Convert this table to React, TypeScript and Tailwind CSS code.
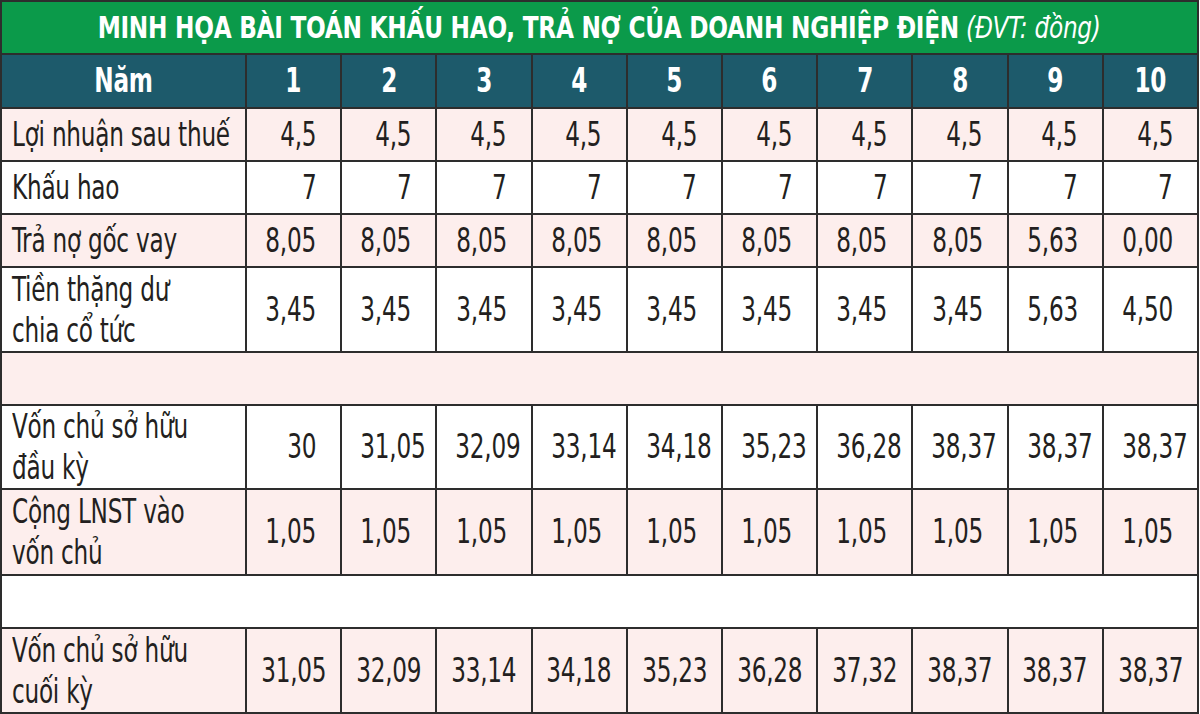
type Row = { label: string[]; values: string[]; pink: boolean; h: string };

const rows: Row[] = [
  { label: ['Lợi nhuận sau thuế'], values: ['4,5', '4,5', '4,5', '4,5', '4,5', '4,5', '4,5', '4,5', '4,5', '4,5'], pink: true, h: 'h-[53px]' },
  { label: ['Khấu hao'], values: ['7', '7', '7', '7', '7', '7', '7', '7', '7', '7'], pink: false, h: 'h-[53px]' },
  { label: ['Trả nợ gốc vay'], values: ['8,05', '8,05', '8,05', '8,05', '8,05', '8,05', '8,05', '8,05', '5,63', '0,00'], pink: true, h: 'h-[53px]' },
  { label: ['Tiền thặng dư', 'chia cổ tức'], values: ['3,45', '3,45', '3,45', '3,45', '3,45', '3,45', '3,45', '3,45', '5,63', '4,50'], pink: false, h: 'h-[85px]' },
];

const rows2: Row[] = [
  { label: ['Vốn chủ sở hữu', 'đầu kỳ'], values: ['30', '31,05', '32,09', '33,14', '34,18', '35,23', '36,28', '38,37', '38,37', '38,37'], pink: false, h: 'h-[84px]' },
  { label: ['Cộng LNST vào', 'vốn chủ'], values: ['1,05', '1,05', '1,05', '1,05', '1,05', '1,05', '1,05', '1,05', '1,05', '1,05'], pink: true, h: 'h-[86px]' },
];

const last = ['31,05', '32,09', '33,14', '34,18', '35,23', '36,28', '37,32', '38,37', '38,37', '38,37'];

const cell = 'border-2 border-[#2d2d2d] whitespace-nowrap';

// the reference uses a condensed face; squeeze DejaVu Condensed to match
function Narrow({ children, origin = 'origin-center' }: { children: React.ReactNode; origin?: string }) {
  return <span className={`inline-block scale-x-[0.78] ${origin}`}>{children}</span>;
}

function Label({ lines }: { lines: string[] }) {
  return (
    <td className={`${cell} pl-[10px] text-left leading-[41px]`}>
      {lines.map((l, i) => (
        <div key={i}>
          <Narrow origin="origin-left">{l}</Narrow>
        </div>
      ))}
    </td>
  );
}

function DataRow({ r }: { r: Row }) {
  return (
    <tr className={`${r.h} ${r.pink ? 'bg-[#fdeeed]' : 'bg-white'}`}>
      <Label lines={r.label} />
      {r.values.map((v, i) => (
        <td key={i} className={`${cell} pr-[24px] text-right`}>
          <Narrow origin="origin-right">{v}</Narrow>
        </td>
      ))}
    </tr>
  );
}

export default function App() {
  return (
    <div className="h-[714px] w-[1200px] overflow-hidden bg-white">
      <table
        className="w-[1199px] table-fixed border-collapse text-[33px] tracking-[-0.3px] text-[#231f20]"
        style={{ fontFamily: '"DejaVu Sans Condensed", "Liberation Sans", sans-serif' }}
      >
        <colgroup>
          <col className="w-[245px]" />
          {Array.from({ length: 10 }).map((_, i) => (
            <col key={i} />
          ))}
        </colgroup>
        <tbody>
          {/* title */}
          <tr className="h-[53px] bg-[#0b9a4a]">
            <td colSpan={11} className={`${cell} text-center text-[30px] text-white`}>
              <span className="inline-block origin-center scale-x-[0.86]">
                <span className="font-bold">MINH HỌA BÀI TOÁN KHẤU HAO, TRẢ NỢ CỦA DOANH NGHIỆP ĐIỆN</span>{' '}
                <span className="italic">(ĐVT: đồng)</span>
              </span>
            </td>
          </tr>
          {/* header */}
          <tr className="h-[54px] bg-[#1d5a6b] font-bold text-white">
            <td className={`${cell} text-center`}>
              <Narrow>Năm</Narrow>
            </td>
            {Array.from({ length: 10 }).map((_, i) => (
              <td key={i} className={`${cell} text-center`}>
                <Narrow>{i + 1}</Narrow>
              </td>
            ))}
          </tr>
          {rows.map((r, i) => (
            <DataRow key={i} r={r} />
          ))}
          <tr className="h-[53px] bg-[#fdeeed]">
            <td colSpan={11} className={cell}></td>
          </tr>
          {rows2.map((r, i) => (
            <DataRow key={i} r={r} />
          ))}
          <tr className="h-[53px] bg-white">
            <td colSpan={11} className={cell}></td>
          </tr>
          <tr className="h-[85px] bg-[#fdeeed]">
            <Label lines={['Vốn chủ sở hữu', 'cuối kỳ']} />
            {last.map((v, i) => (
              <td key={i} className={`${cell} text-center`}>
                <Narrow>{v}</Narrow>
              </td>
            ))}
          </tr>
        </tbody>
      </table>
    </div>
  );
}
